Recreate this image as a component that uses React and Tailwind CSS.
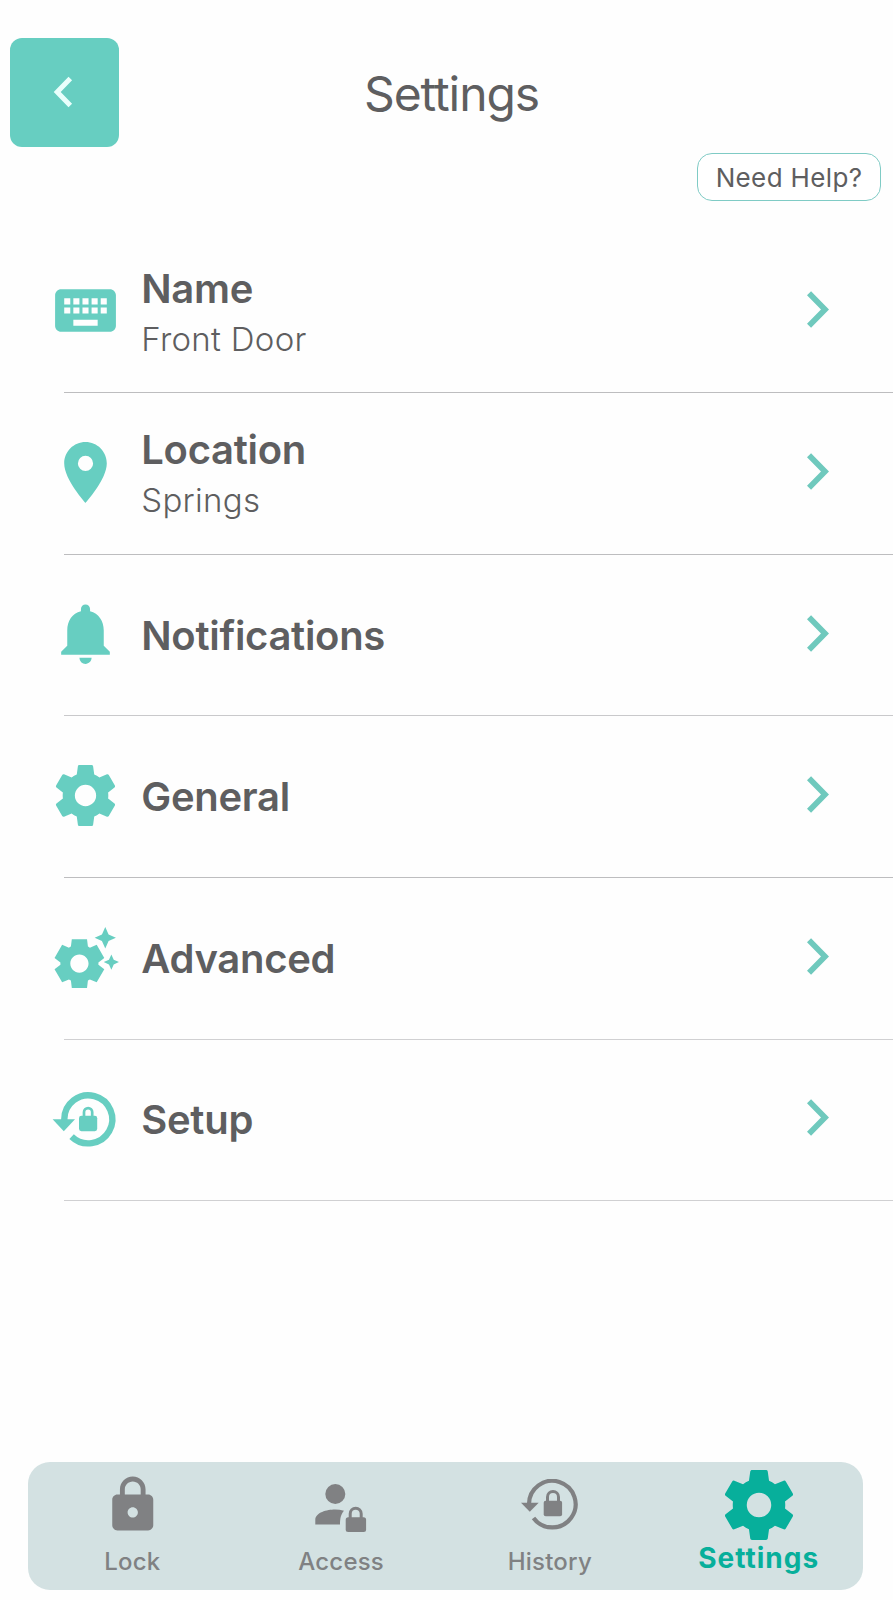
import React, { useState } from "react";
import { MdKeyboard, MdLocationOn, MdNotifications, MdSettingsSuggest, MdLock } from "react-icons/md";

function GearIcon({ className }) {
  return (
    <svg viewBox="0 0 24 24" fill="currentColor" className={className}>
      <path d="M12 15.5A3.5 3.5 0 0 1 8.5 12 3.5 3.5 0 0 1 12 8.5a3.5 3.5 0 0 1 3.5 3.5 3.5 3.5 0 0 1-3.5 3.5m7.43-2.53c.04-.32.07-.64.07-.97s-.03-.66-.07-1l2.11-1.63c.19-.15.24-.42.12-.64l-2-3.46c-.12-.22-.39-.31-.61-.22l-2.49 1c-.52-.39-1.06-.73-1.69-.98l-.37-2.65A.506.506 0 0 0 14 2h-4c-.25 0-.46.18-.5.42l-.37 2.65c-.63.25-1.17.59-1.69.98l-2.49-1c-.22-.09-.49 0-.61.22l-2 3.46c-.13.22-.07.49.12.64L4.57 11c-.04.34-.07.67-.07 1s.03.65.07.97l-2.11 1.66c-.19.15-.25.42-.12.64l2 3.46c.12.22.39.3.61.22l2.49-1.01c.52.4 1.06.74 1.69.99l.37 2.65c.04.24.25.42.5.42h4c.25 0 .46-.18.5-.42l.37-2.65c.63-.26 1.17-.59 1.69-.99l2.49 1.01c.22.08.49 0 .61-.22l2-3.46c.12-.22.07-.49-.12-.64z" />
    </svg>
  );
}

function SetupIcon({ className }) {
  return (
    <svg viewBox="0 0 73 73" fill="none" stroke="currentColor" className={className}>
      <path d="M15.3 38.5V37.3A24 24 0 1 1 22.6 54.6" strokeWidth="6.4" />
      <path d="M3.6 37.3h22.4L14.8 49.3z" fill="currentColor" stroke="none" />
      <rect x="30" y="33.8" width="18.2" height="15.4" rx="2.4" fill="currentColor" stroke="none" />
      <path d="M35 35V30.2a4.1 4.1 0 0 1 8.2 0V35" strokeWidth="2.7" />
    </svg>
  );
}

function HistoryIcon() {
  return (
    <svg viewBox="0 0 58 52" fill="none" stroke="currentColor" className="w-[58px] h-[52px]">
      <path d="M8 25.3A23.3 23.3 0 1 1 12.5 38.9" strokeWidth="4.2" />
      <path d="M0 23.7h17.7L8.8 32.7z" fill="currentColor" stroke="none" />
      <rect x="22.7" y="21.7" width="18.4" height="15.5" rx="2" fill="currentColor" stroke="none" />
      <path d="M26.5 23V17.9a5.5 5.5 0 0 1 11 0V23" strokeWidth="3" />
    </svg>
  );
}

function AccessIcon() {
  return (
    <svg viewBox="0 0 52 48" fill="currentColor" className="w-[52px] h-[48px] mt-[6px]">
      <circle cx="20.3" cy="10" r="10" />
      <path d="M.3 40.4V36C.3 28.6 12 25.6 20 25.6c3 0 6 .3 9 1.1-3 3.6-4 7.5-4 13.7z" />
      <rect x="30.7" y="33.3" width="20.4" height="14.7" rx="2.5" />
      <path d="M35.2 35v-5.3a5.5 5.5 0 0 1 11 0V35" fill="none" stroke="currentColor" strokeWidth="3" />
    </svg>
  );
}

function Chevron() {
  return (
    <svg viewBox="0 0 22 37" fill="none" stroke="currentColor" className="w-[22px] h-[37px] text-[#6fc9bd]">
      <path d="M2 2.2 18 18.5 2 34.8" strokeWidth="5.8" />
    </svg>
  );
}

const opciones = [
  { title: "Name", subtitle: "Front Door", icon: <MdKeyboard className="size-[73px]" />, line: "bg-[#bdbdbf]" },
  { title: "Location", subtitle: "Springs", icon: <MdLocationOn className="size-[73px]" />, line: "bg-[#bdbdbf]" },
  { title: "Notifications", icon: <MdNotifications className="size-[73px]" />, line: "bg-[#c9c9cb]" },
  { title: "General", icon: <GearIcon className="size-[73px]" />, line: "bg-[#bdbdbf]" },
  { title: "Advanced", icon: <MdSettingsSuggest className="size-[73px]" />, line: "bg-[#d0d0d2]" },
  { title: "Setup", icon: <SetupIcon className="size-[73px]" />, line: "bg-[#d0d0d2]" },
];

const tabs = [
  { name: "Lock", icon: <MdLock className="size-[61.5px]" /> },
  { name: "Access", icon: <AccessIcon /> },
  { name: "History", icon: <HistoryIcon /> },
  { name: "Settings", icon: <GearIcon className="size-[84px]" /> },
];

export default function App() {
  const [activo, setActivo] = useState("Settings");

  return (
    <div className="flex flex-col w-full h-[1600px] overflow-hidden bg-[#fefefe] text-[#5e5e60] font-['Inter',sans-serif]">
      <header className="flex items-center h-[147px] pt-[38px] pl-[10px] pr-[109px]">
        <button className="flex items-center justify-center size-[109px] rounded-xl bg-[#67cec1] text-[#e9fffc]">
          <svg viewBox="0 0 20 32" fill="none" stroke="currentColor" className="w-5 h-8 mr-[4px] mb-[2px]">
            <path d="M17.3 2.5 4.2 16 17.3 29.5" strokeWidth="5" />
          </svg>
        </button>
        <h1 className="flex-1 pt-[3px] text-center text-[48px] leading-[60px] tracking-[-1.1px]">Settings</h1>
      </header>

      <div className="flex justify-end pt-[6px] pr-[12px]">
        <button className="w-[184px] h-[48px] pt-[2px] rounded-[15px] border border-[#7fcbc5] bg-white text-[26px] leading-none tracking-[0.35px] whitespace-nowrap">
          Need Help?
        </button>
      </div>

      <main className="pt-[30.5px]">
        {opciones.map((item) => (
          <div key={item.title}>
            <div className="flex items-center h-[160.63px] pl-[49.3px] pr-[64px]">
              <div className="text-[#67cec1] pb-[2.5px]">{item.icon}</div>
              <div className={item.subtitle ? "flex-1 pl-[19px] pt-[4px]" : "flex-1 pl-[19px] pt-px"}>
                <div className="text-[40px] leading-[50px] font-semibold tracking-[-0.3px]">{item.title}</div>
                {item.subtitle && (
                  <div className="text-[33px] leading-[50px] font-light tracking-[0.3px]">{item.subtitle}</div>
                )}
              </div>
              <div className="pb-[4px]">
                <Chevron />
              </div>
            </div>
            <div className={`h-px ml-16 ${item.line}`} />
          </div>
        ))}
      </main>

      <nav className="grid grid-cols-4 h-[128px] mt-auto mb-[10px] ml-[28px] mr-[30px] rounded-[22px] bg-[#d3e1e2]">
        {tabs.map((tab) => (
          <button
            key={tab.name}
            onClick={() => setActivo(tab.name)}
            className={
              tab.name === activo
                ? "flex flex-col items-center text-[#07af9b]"
                : "flex flex-col items-center text-[#808183]"
            }
          >
            <span className="flex items-center justify-center h-[85px]">{tab.icon}</span>
            <span
              className={
                tab.name === activo
                  ? "text-[28px] leading-[22px] font-bold tracking-[1px]"
                  : "text-[24px] leading-[30px] font-medium tracking-[0.2px]"
              }
            >
              {tab.name}
            </span>
          </button>
        ))}
      </nav>
    </div>
  );
}
